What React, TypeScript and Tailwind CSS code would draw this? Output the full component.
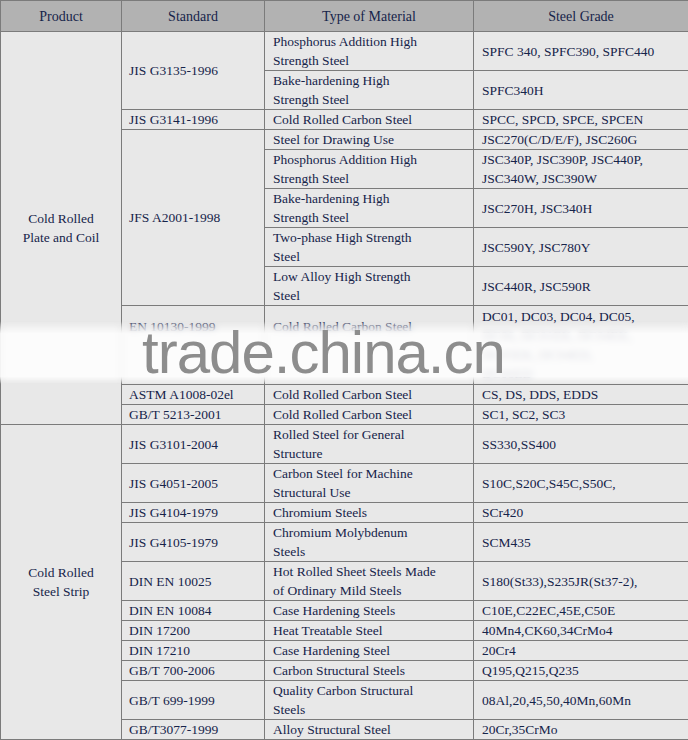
import React from 'react';

type Row = { std?: React.ReactNode; stdSpan?: number; mat: React.ReactNode; grade: React.ReactNode; h?: string };

const plate: Row[] = [
  { std: 'JIS G3135-1996', stdSpan: 2, mat: <>Phosphorus Addition High<br />Strength Steel</>, grade: 'SPFC 340, SPFC390, SPFC440' },
  { mat: <>Bake-hardening High<br />Strength Steel</>, grade: 'SPFC340H' },
  { std: 'JIS G3141-1996', mat: 'Cold Rolled Carbon Steel', grade: 'SPCC, SPCD, SPCE, SPCEN' },
  { std: 'JFS A2001-1998', stdSpan: 5, mat: 'Steel for Drawing Use', grade: 'JSC270(C/D/E/F), JSC260G' },
  { mat: <>Phosphorus Addition High<br />Strength Steel</>, grade: <>JSC340P, JSC390P, JSC440P,<br />JSC340W, JSC390W</> },
  { mat: <>Bake-hardening High<br />Strength Steel</>, grade: 'JSC270H, JSC340H' },
  { mat: <>Two-phase High Strength<br />Steel</>, grade: 'JSC590Y, JSC780Y' },
  { mat: <>Low Alloy High Strength<br />Steel</>, grade: 'JSC440R, JSC590R' },
  {
    std: <>EN 10130-1999<br />&nbsp;<br />&nbsp;</>,
    mat: <>Cold Rolled Carbon Steel<br />&nbsp;<br />&nbsp;</>,
    grade: <>DC01, DC03, DC04, DC05,<br />DC06, DC01EK, DC04EK,<br />DC05EK, DC04ED,<br />DC06ED</>,
    h: 'h-[79px]',
  },
  { std: 'ASTM A1008-02el', mat: 'Cold Rolled Carbon Steel', grade: 'CS, DS, DDS, EDDS' },
  { std: 'GB/T 5213-2001', mat: 'Cold Rolled Carbon Steel', grade: 'SC1, SC2, SC3' },
];

const strip: Row[] = [
  { std: 'JIS G3101-2004', mat: <>Rolled Steel for General<br />Structure</>, grade: 'SS330,SS400' },
  { std: 'JIS G4051-2005', mat: <>Carbon Steel for Machine<br />Structural Use</>, grade: 'S10C,S20C,S45C,S50C,' },
  { std: 'JIS G4104-1979', mat: 'Chromium Steels', grade: 'SCr420' },
  { std: 'JIS G4105-1979', mat: <>Chromium Molybdenum<br />Steels</>, grade: 'SCM435' },
  { std: 'DIN EN 10025', mat: <>Hot Rolled Sheet Steels Made<br />of Ordinary Mild Steels</>, grade: 'S180(St33),S235JR(St37-2),' },
  { std: 'DIN EN 10084', mat: 'Case Hardening Steels', grade: 'C10E,C22EC,45E,C50E' },
  { std: 'DIN 17200', mat: 'Heat Treatable Steel', grade: '40Mn4,CK60,34CrMo4' },
  { std: 'DIN 17210', mat: 'Case Hardening Steel', grade: '20Cr4' },
  { std: 'GB/T 700-2006', mat: 'Carbon Structural Steels', grade: 'Q195,Q215,Q235' },
  { std: 'GB/T 699-1999', mat: <>Quality Carbon Structural<br />Steels</>, grade: '08Al,20,45,50,40Mn,60Mn' },
  { std: 'GB/T3077-1999', mat: 'Alloy Structural Steel', grade: '20Cr,35CrMo' },
];

const cell = 'border border-[#7b7b7b] py-0 align-middle';

function Group({ name, rows }: { name: React.ReactNode; rows: Row[] }) {
  return (
    <>
      {rows.map((r, i) => (
        <tr key={i} className={r.h}>
          {i === 0 && (
            <td rowSpan={rows.length} className={`${cell} px-[4px] text-center`}>
              {name}
            </td>
          )}
          {r.std !== undefined && (
            <td rowSpan={r.stdSpan ?? 1} className={`${cell} px-[7px] text-left`}>
              {r.std}
            </td>
          )}
          <td className={`${cell} px-[8px] text-left`}>{r.mat}</td>
          <td className={`${cell} px-[8px] text-left`}>{r.grade}</td>
        </tr>
      ))}
    </>
  );
}

export default function App() {
  return (
    <div className="relative w-[688px] h-[740px] overflow-hidden bg-[#e8e8e8]">
      <table
        className="w-[688px] table-fixed border-collapse bg-[#e8e8e8] text-[#16244a] text-[13.5px] leading-[19px]"
        style={{ fontFamily: '"Liberation Serif", "DejaVu Serif", serif' }}
      >
        <colgroup>
          <col className="w-[121px]" />
          <col className="w-[143px]" />
          <col className="w-[209px]" />
          <col className="w-[215px]" />
        </colgroup>
        <thead>
          <tr className="h-[31px] bg-[#b2b2b2]">
            {['Product', 'Standard', 'Type of Material', 'Steel Grade'].map((h) => (
              <th key={h} className="border border-[#7b7b7b] font-normal text-center align-middle text-[14px] text-[#16244a]">
                {h}
              </th>
            ))}
          </tr>
        </thead>
        <tbody>
          <Group name={<>Cold Rolled<br />Plate and Coil</>} rows={plate} />
          <Group name={<>Cold Rolled<br />Steel Strip</>} rows={strip} />
        </tbody>
      </table>

      {/* watermark band */}
      <div className="absolute left-0 right-0 top-[321px] h-[63px] bg-white/85 backdrop-blur-[3px] [mask-image:linear-gradient(to_bottom,transparent_0%,black_20%,black_88%,transparent_100%)]" />
      <div
        className="absolute left-[142px] top-[322px] h-[62px] flex items-center text-[60px] leading-none tracking-[-1px] text-[#8d8d8d]"
        style={{ fontFamily: '"Liberation Sans", Arial, sans-serif' }}
      >
        trade.china.cn
      </div>
    </div>
  );
}
